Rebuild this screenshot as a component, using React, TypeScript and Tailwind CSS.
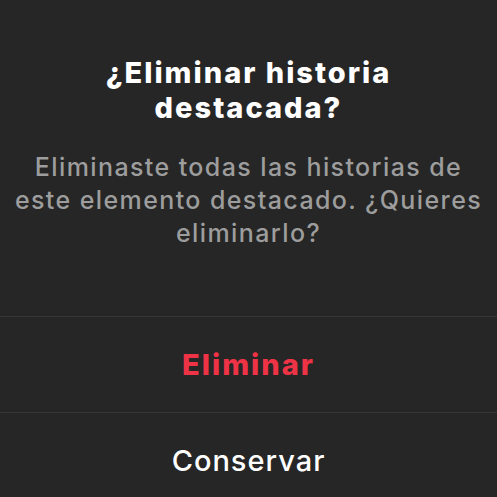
export default function App() {
  return (
    <div className="h-[497px] w-[497px] overflow-hidden bg-[#262626] font-['Inter','Noto_Sans',sans-serif]">
      <div className="flex h-[316px] flex-col items-center px-2 pt-[55px] text-center">
        <h1 className="text-[29px] font-extrabold leading-[35px] tracking-[2px] text-white">
          ¿Eliminar historia
          <br />
          destacada?
        </h1>
        <p className="mt-[26px] text-[25px] font-medium leading-[33px] tracking-[1.4px] text-[#9d9d9d]">
          Eliminaste todas las historias de este elemento destacado. ¿Quieres eliminarlo?
        </p>
      </div>
      <button className="flex h-[96px] w-full items-center justify-center border-t border-[#363636] text-[29px] font-extrabold tracking-[2px] text-[#ee3346]">
        Eliminar
      </button>
      <button className="flex h-[96px] w-full items-center justify-center border-t border-[#363636] text-[29px] font-medium tracking-[1px] text-white">
        Conservar
      </button>
    </div>
  );
}
